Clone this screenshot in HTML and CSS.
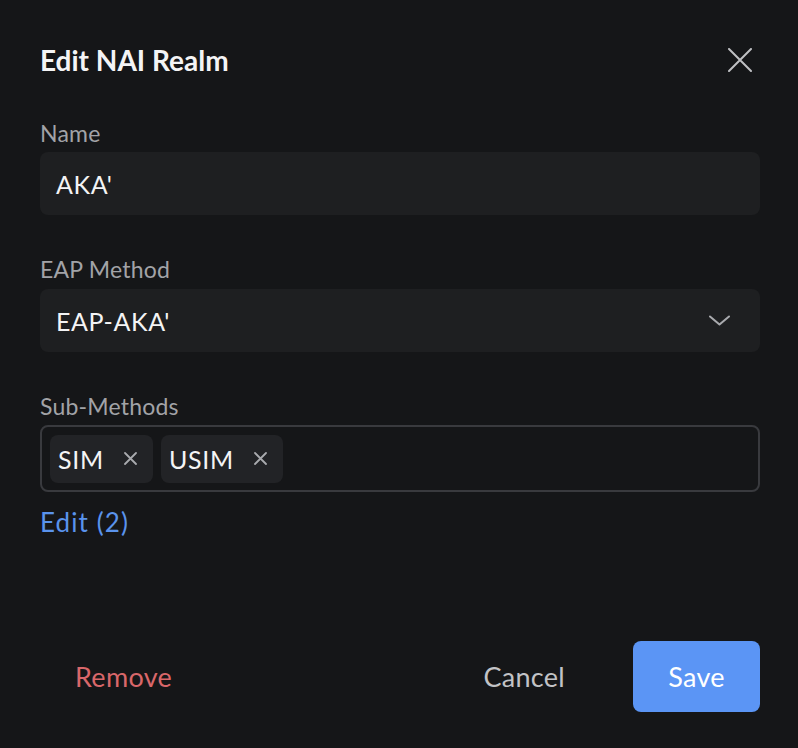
FILE: index.html
```html
<!DOCTYPE html>
<html>
<head>
<meta charset="utf-8">
<link rel="stylesheet" href="styles.css">
</head>
<body>
<div class="dialog">
  <div class="header">
    <h1 class="title">Edit NAI Realm</h1>
    <button class="close" aria-label="Close">
      <svg width="24" height="24" viewBox="0 0 24 24"><path d="M1 1 L23 23 M23 1 L1 23" stroke="#bfc0c3" stroke-width="2" stroke-linecap="round" fill="none"/></svg>
    </button>
  </div>

  <div class="field">
    <label class="label">Name</label>
    <div class="input">AKA'</div>
  </div>

  <div class="field">
    <label class="label">EAP Method</label>
    <div class="input select">
      <span>EAP-AKA'</span>
      <svg width="21" height="11" viewBox="0 0 21 11"><path d="M1 1.5 L10.5 9.5 L20 1.5" stroke="#a9aaae" stroke-width="2" fill="none" stroke-linecap="round" stroke-linejoin="round"/></svg>
    </div>
  </div>

  <div class="field last">
    <label class="label">Sub-Methods</label>
    <div class="tagbox">
      <span class="tag">SIM<svg class="x" width="13" height="13" viewBox="0 0 13 13"><path d="M1 1 L12 12 M12 1 L1 12" stroke="#a9aaae" stroke-width="1.8" stroke-linecap="round"/></svg></span>
      <span class="tag">USIM<svg class="x" width="13" height="13" viewBox="0 0 13 13"><path d="M1 1 L12 12 M12 1 L1 12" stroke="#a9aaae" stroke-width="1.8" stroke-linecap="round"/></svg></span>
    </div>
    <a class="edit-link">Edit (2)</a>
  </div>

  <div class="footer">
    <button class="btn remove">Remove</button>
    <div class="right">
      <button class="btn cancel">Cancel</button>
      <button class="btn save">Save</button>
    </div>
  </div>
</div>
</body>
</html>
```

FILE: styles.css
```css
html, body {
  margin: 0;
  padding: 0;
  background: #151618;
}
body {
  font-family: Lato, "Noto Sans", sans-serif;
  color: #f2f2f3;
  width: 798px;
  height: 748px;
  overflow: hidden;
}
.dialog {
  padding: 42px 38px 36px 40px;
  display: flex;
  flex-direction: column;
  height: 748px;
  box-sizing: border-box;
}
.header {
  display: flex;
  justify-content: space-between;
  align-items: center;
  height: 36px;
  margin-bottom: 41px;
}
.title {
  margin: 0;
  font-size: 28px;
  line-height: 36px;
  font-weight: 700;
  color: #f4f4f5;
}
.close {
  background: none;
  border: none;
  padding: 0;
  width: 24px;
  height: 24px;
  margin-right: 8px;
  display: flex;
}
.field {
  display: flex;
  flex-direction: column;
  margin-bottom: 40px;
}
.field.last {
  margin-bottom: 0;
}
.label {
  font-size: 23px;
  line-height: 28px;
  color: #a2a3a7;
  margin-bottom: 5px;
  letter-spacing: 0.2px;
}
.input {
  background: #1e1f21;
  border-radius: 8px;
  height: 63px;
  display: flex;
  align-items: center;
  padding: 0 16px;
  font-size: 25px;
  letter-spacing: 0.6px;
  color: #f4f4f5;
}
.select {
  justify-content: space-between;
  padding-right: 30px;
}
.field:nth-child(3) .label {
  margin-bottom: 6px;
}
.tagbox {
  border: 2px solid #393a3e;
  border-radius: 8px;
  height: 67px;
  box-sizing: border-box;
  display: flex;
  align-items: center;
  gap: 8px;
  padding: 0 8px;
}
.tag {
  background: #222326;
  border-radius: 8px;
  height: 48px;
  display: flex;
  align-items: center;
  padding: 0 16px 0 8px;
  font-size: 25px;
  letter-spacing: 0.7px;
  color: #f4f4f5;
}
.tag .x {
  margin-left: 20px;
}
.edit-link {
  margin-top: 15px;
  font-size: 26px;
  line-height: 30px;
  letter-spacing: 1.1px;
  color: #5a93ec;
}
.footer {
  margin-top: auto;
  display: flex;
  justify-content: space-between;
  align-items: center;
}
.right {
  display: flex;
  align-items: center;
  gap: 68px;
}
.btn {
  font-family: inherit;
  font-size: 27px;
  border: none;
  background: none;
  padding: 0;
  cursor: pointer;
  letter-spacing: 0.3px;
}
.remove {
  color: #d9676a;
  margin-left: 35px;
}
.cancel {
  color: #c2c3c6;
}
.save {
  background: #5b95f5;
  color: #ffffff;
  width: 127px;
  height: 71px;
  border-radius: 8px;
}
```
